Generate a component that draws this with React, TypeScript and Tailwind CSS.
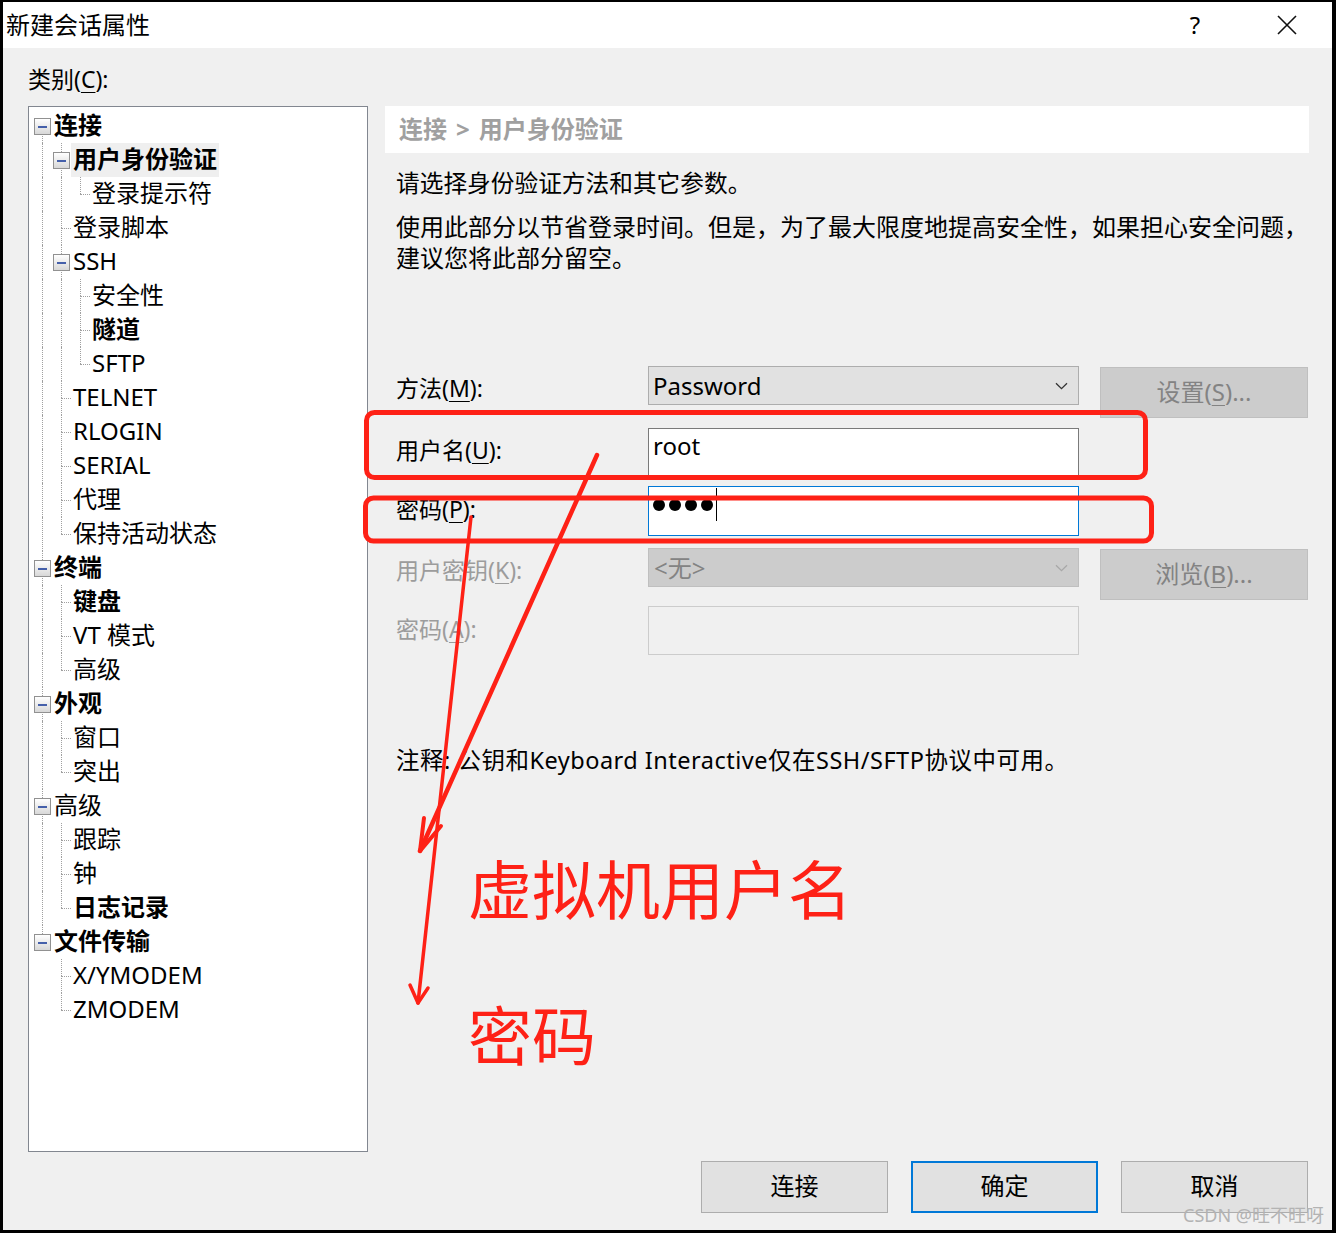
import React from 'react';

type Node = { label: string; bold?: boolean; selected?: boolean; children?: Node[] };

const tree: Node[] = [
  {
    label: '连接',
    bold: true,
    children: [
      { label: '用户身份验证', bold: true, selected: true, children: [{ label: '登录提示符' }] },
      { label: '登录脚本' },
      { label: 'SSH', children: [{ label: '安全性' }, { label: '隧道', bold: true }, { label: 'SFTP' }] },
      { label: 'TELNET' },
      { label: 'RLOGIN' },
      { label: 'SERIAL' },
      { label: '代理' },
      { label: '保持活动状态' },
    ],
  },
  { label: '终端', bold: true, children: [{ label: '键盘', bold: true }, { label: 'VT 模式' }, { label: '高级' }] },
  { label: '外观', bold: true, children: [{ label: '窗口' }, { label: '突出' }] },
  { label: '高级', children: [{ label: '跟踪' }, { label: '钟' }, { label: '日志记录', bold: true }] },
  { label: '文件传输', bold: true, children: [{ label: 'X/YMODEM' }, { label: 'ZMODEM' }] },
];

type Row = { node: Node; guides: boolean[]; hasNext: boolean; first: boolean };

function flatten(nodes: Node[], guides: boolean[], out: Row[]) {
  nodes.forEach((node, i) => {
    const hasNext = i < nodes.length - 1;
    out.push({ node, guides, hasNext, first: guides.length === 0 && i === 0 });
    if (node.children) flatten(node.children, [...guides, hasNext], out);
  });
  return out;
}

const rows = flatten(tree, [], []);

function TreeRow({ row }: { row: Row }) {
  const { node, guides, hasNext, first } = row;
  return (
    <div className="flex h-[34px]">
      {guides.map((g, i) => (
        <div key={i} className="relative w-[19px] shrink-0">
          {g && <div className="absolute left-[9px] top-0 bottom-0 border-l border-dotted border-[#a0a0a0]" />}
        </div>
      ))}
      <div className="relative w-[19px] shrink-0">
        {!first && <div className="absolute left-[9px] top-0 h-[17px] border-l border-dotted border-[#a0a0a0]" />}
        {hasNext && <div className="absolute left-[9px] top-[17px] bottom-0 border-l border-dotted border-[#a0a0a0]" />}
        {node.children ? (
          <div className="absolute left-[1px] top-[9px] flex h-[17px] w-[17px] items-center justify-center border border-[#919191] bg-linear-to-b from-white to-[#d8d8d8]">
            <div className="h-[2px] w-[9px] bg-[#4560aa]" />
          </div>
        ) : (
          <div className="absolute left-[9px] right-0 top-[17px] border-t border-dotted border-[#a0a0a0]" />
        )}
      </div>
      <span
        className={`whitespace-nowrap px-[2px] pb-[2px] text-[24px] leading-[32px] text-black ${node.bold ? 'font-bold' : ''} ${
          node.selected ? 'bg-[#efefef]' : ''
        }`}
      >
        {node.label}
      </span>
    </div>
  );
}

function Chevron({ color }: { color: string }) {
  return (
    <svg width="13" height="8" viewBox="0 0 13 8" className="shrink-0">
      <path d="M1 1.2l5.5 5.5L12 1.2" stroke={color} strokeWidth="1.3" fill="none" />
    </svg>
  );
}

function U({ children }: { children: React.ReactNode }) {
  return <span className="underline underline-offset-[4px] decoration-1">{children}</span>;
}

function Dot() {
  return <span className="h-[12px] w-[12px] rounded-full bg-black" />;
}

export default function App() {
  return (
    <div className="relative h-[1233px] w-[1336px] bg-black pb-[3px] pl-[3px] pr-[4px] pt-[2px] font-['Noto_Sans','Noto_Sans_CJK_SC',sans-serif] [text-spacing-trim:space-all]">
      <div className="flex h-full flex-col">
        {/* title bar */}
        <div className="flex h-[46px] shrink-0 items-center bg-white pl-[3px]">
          <span className="text-[24px] leading-[30px] text-black">新建会话属性</span>
          <div className="ml-auto flex items-center pr-[35px]">
            <span className="w-[24px] text-center text-[24px] text-black">?</span>
            <svg width="20" height="20" viewBox="0 0 20 20" className="ml-[70px]">
              <path d="M1 1L19 19M19 1L1 19" stroke="#111" strokeWidth="1.6" />
            </svg>
          </div>
        </div>

        {/* body */}
        <div className="flex flex-1 flex-col bg-[#f0f0f0]">
          <div className="h-[58px] pl-[25px] pt-[16px] text-[23px] leading-[30px] text-black">
            类别(<U>C</U>):
          </div>

          <div className="flex pl-[25px]">
            {/* tree */}
            <div className="h-[1046px] w-[340px] shrink-0 border border-[#828790] bg-white pl-[4px] pt-[2px]">
              {rows.map((r, i) => (
                <TreeRow key={i} row={r} />
              ))}
            </div>

            {/* right panel */}
            <div className="ml-[17px] flex w-[924px] flex-col">
              <div className="h-[47px] bg-white pl-[14px] text-[24px] font-bold leading-[45px] text-[#a0a0a0]">
                连接<span className="px-[9px]">&gt;</span>用户身份验证
              </div>
              <p className="mt-[15px] whitespace-nowrap pl-[11px] text-[23.7px] leading-[31px] text-black">
                请选择身份验证方法和其它参数。
              </p>
              <p className="mt-[12px] whitespace-nowrap pl-[11px] text-[24px] leading-[31px] text-black">
                使用此部分以节省登录时间。但是，为了最大限度地提高安全性，如果担心安全问题，
                <br />
                建议您将此部分留空。
              </p>

              <div className="mt-[93px] flex flex-col pl-[11px] text-[23px] leading-[30px]">
                {/* method */}
                <div className="flex h-[62px]">
                  <div className="w-[252px] pt-[7px] text-black">
                    方法(<U>M</U>):
                  </div>
                  <div className="flex h-[39px] w-[431px] items-center justify-between border border-[#adadad] bg-[#e1e1e1] pl-[4px] pr-[10px]">
                    <span className="text-[24px] leading-[32px] text-black">Password</span>
                    <Chevron color="#333" />
                  </div>
                  <div className="ml-[21px] mt-[1px] flex h-[51px] w-[208px] items-center justify-center border border-[#bfbfbf] bg-[#cccccc] pb-[2px] text-[24px] text-[#838383]">
                    设置(<U>S</U>)...
                  </div>
                </div>

                {/* username */}
                <div className="flex h-[58px]">
                  <div className="w-[252px] pt-[7px] text-black">
                    用户名(<U>U</U>):
                  </div>
                  <div className="h-[49px] w-[431px] border border-[#7a7a7a] bg-white pl-[4px] pt-[2px] text-[24px] text-black">
                    root
                  </div>
                </div>

                {/* password */}
                <div className="flex h-[62px]">
                  <div className="w-[252px] pt-[8px] text-black">
                    密码(<U>P</U>):
                  </div>
                  <div className="h-[50px] w-[431px] border border-[#0078d7] bg-white pl-[4px]">
                    <div className="flex h-[34px] items-center">
                      <div className="flex gap-[4px] pt-[2px]">
                        <Dot />
                        <Dot />
                        <Dot />
                        <Dot />
                      </div>
                      <span className="ml-[3px] h-[33px] w-[1px] bg-black" />
                    </div>
                  </div>
                </div>

                {/* user key */}
                <div className="flex h-[58px]">
                  <div className="w-[252px] pt-[7px] text-[#9c9c9c]">
                    用户密钥(<U>K</U>):
                  </div>
                  <div className="flex h-[39px] w-[431px] items-center justify-between border border-[#bfbfbf] bg-[#cccccc] pl-[5px] pr-[10px]">
                    <span className="text-[24px] leading-[32px] text-[#838383]">&lt;无&gt;</span>
                    <Chevron color="#a8a8a8" />
                  </div>
                  <div className="ml-[21px] mt-[1px] flex h-[51px] w-[208px] items-center justify-center border border-[#bfbfbf] bg-[#cccccc] pb-[2px] text-[24px] text-[#838383]">
                    浏览(<U>B</U>)...
                  </div>
                </div>

                {/* passphrase */}
                <div className="flex h-[49px]">
                  <div className="w-[252px] pt-[8px] text-[#9c9c9c]">
                    密码(<U>A</U>):
                  </div>
                  <div className="h-[49px] w-[431px] border border-[#cccccc] bg-[#f0f0f0]" />
                </div>
              </div>

              <p className="mt-[90px] whitespace-nowrap pl-[11px] text-[23.5px] leading-[30px] tracking-[0.5px] text-black">
                注释: 公钥和Keyboard Interactive仅在SSH/SFTP协议中可用。
              </p>
            </div>
          </div>

          {/* buttons */}
          <div className="mt-[9px] flex justify-end gap-[23px] pr-[24px]">
            <div className="flex h-[52px] w-[187px] items-center justify-center border border-[#adadad] bg-[#e1e1e1] pb-[2px] text-[24px] text-black">
              连接
            </div>
            <div className="flex h-[52px] w-[187px] items-center justify-center border-2 border-[#0078d7] bg-[#e1e1e1] pb-[2px] text-[24px] text-black">
              确定
            </div>
            <div className="flex h-[52px] w-[187px] items-center justify-center border border-[#adadad] bg-[#e1e1e1] pb-[2px] text-[24px] text-black">
              取消
            </div>
          </div>
        </div>
      </div>

      {/* red annotations drawn over the screenshot */}
      <svg
        className="pointer-events-none absolute left-0 top-0"
        width="1336"
        height="1233"
        viewBox="0 0 1336 1233"
      >
        <g stroke="#fe2116" fill="none" strokeLinecap="round" strokeLinejoin="round">
          <rect x="366.5" y="412.5" width="779" height="65" rx="8" strokeWidth="5" />
          <rect x="365.5" y="498" width="786" height="43" rx="8" strokeWidth="5" />
          <path d="M597 455L420 851" strokeWidth="4.5" />
          <path d="M420 851L424 818M420 851L441 826" strokeWidth="4" />
          <path d="M471 517L418 1003" strokeWidth="3.5" />
          <path d="M418 1003L410 985M418 1003L428 988" strokeWidth="3.5" />
        </g>
      </svg>
      <div className="pointer-events-none absolute left-[468px] top-[858px] text-[64px] leading-[64px] text-[#fe2116]">
        虚拟机用户名
      </div>
      <div className="pointer-events-none absolute left-[468px] top-[1004px] text-[64px] leading-[64px] text-[#fe2116]">
        密码
      </div>
      <div className="pointer-events-none absolute left-[1183px] top-[1204px] text-[18px] leading-[22px] text-[#b3b3b3]">
        CSDN @旺不旺呀
      </div>
    </div>
  );
}
